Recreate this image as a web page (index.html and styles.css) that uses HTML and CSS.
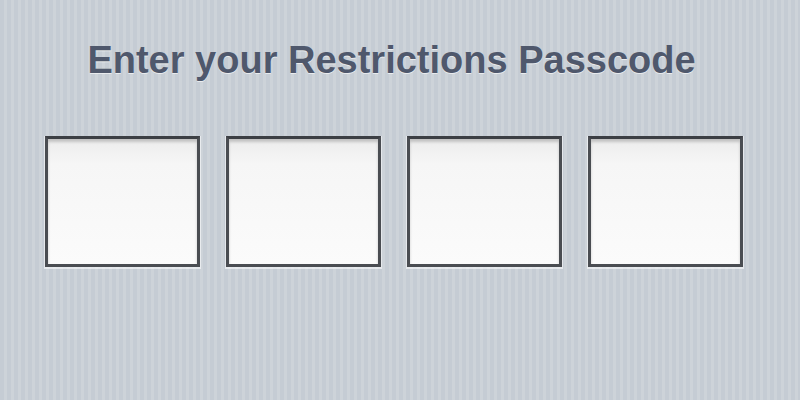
FILE: index.html
```html
<!DOCTYPE html>
<html lang="en">
<head>
<meta charset="utf-8">
<title>Restrictions Passcode</title>
<link rel="stylesheet" href="styles.css">
</head>
<body>
  <main class="passcode">
    <h1 class="prompt">Enter your Restrictions Passcode</h1>
    <div class="fields">
      <div class="field"></div>
      <div class="field"></div>
      <div class="field"></div>
      <div class="field"></div>
    </div>
  </main>
</body>
</html>
```
FILE: styles.css
```css
html, body {
  margin: 0;
  padding: 0;
  width: 800px;
  height: 400px;
  overflow: hidden;
}

body {
  background-color: #c5ccd4;
  background-image: repeating-linear-gradient(
    90deg,
    #c5ccd4 0px,
    #c5ccd4 4px,
    #cdd3d9 4px,
    #cdd3d9 7px
  );
  font-family: "Liberation Sans", Arial, sans-serif;
}

.passcode {
  display: flex;
  flex-direction: column;
  align-items: center;
  padding-top: 38px;
}

.prompt {
  margin: 0 0 0 -17px;
  font-size: 38px;
  font-weight: bold;
  line-height: 44px;
  color: #4f586c;
  text-shadow: 0 1px 0 rgba(255, 255, 255, 0.6);
}

.fields {
  display: flex;
  gap: 26px;
  margin-top: 54px;
  margin-left: -12px;
}

.field {
  box-sizing: border-box;
  width: 155px;
  height: 131px;
  border: 3px solid #4a4d52;
  border-top-color: #3c3f44;
  background: linear-gradient(180deg, #ececec 0%, #f6f6f6 20%, #fbfbfb 100%);
  box-shadow:
    0 1px 0 1px rgba(255, 255, 255, 0.55),
    inset 0 3px 3px rgba(0, 0, 0, 0.18);
}
```
